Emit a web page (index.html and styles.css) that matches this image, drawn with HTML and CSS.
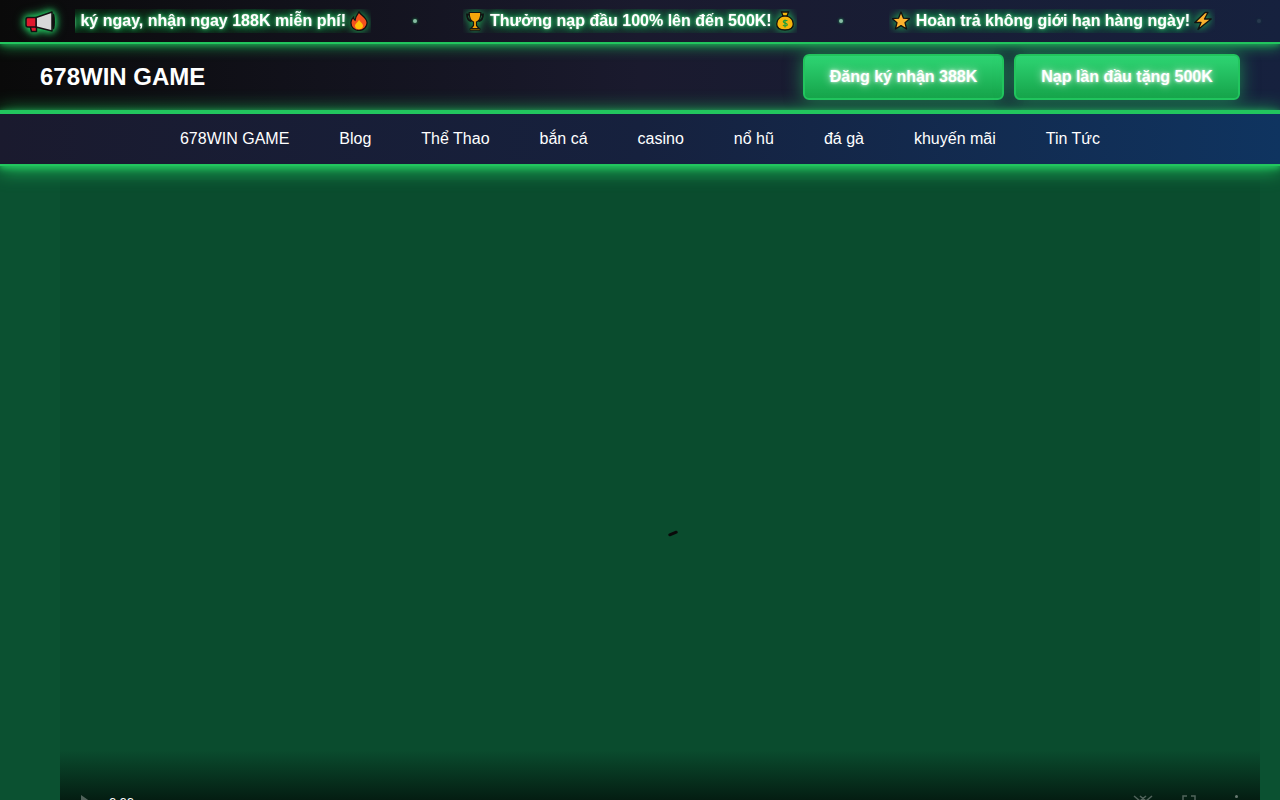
FILE: index.html
```html
<!DOCTYPE html>
<html lang="vi">
<head>
    <meta charset="UTF-8">
    <meta name="viewport" content="width=device-width, initial-scale=1.0">
    <title>678WIN GAME</title>
    <link rel="stylesheet" href="styles.css">
</head>
<body>
    <!-- Ticker -->
    <div class="ticker">
        <div class="ticker-icon">
            <svg width="32" height="26" viewBox="0 0 32 26">
                <path d="M6 18h6.500v5.500H7.500z" fill="#e0182d" stroke="#111" stroke-width="1.500" stroke-linejoin="round"/>
                <path d="M12 9.500 28 4v19l-16-4z" fill="#d8d8d8" stroke="#111" stroke-width="1.500" stroke-linejoin="round"/>
                <path d="M2 11.500Q2 9.500 4 9.500h8v9.500H4Q2 19 2 17z" fill="#e0182d" stroke="#111" stroke-width="1.500" stroke-linejoin="round"/>
                <ellipse cx="29.500" cy="13.500" rx="1.500" ry="8" fill="#111"/>
            </svg>
        </div>
        <div class="ticker-window">
            <div class="ticker-track">
                <span class="ticker-item">
                    Đăng ký ngay, nhận ngay 188K miễn phí!
                    <svg class="emoji emoji-end" width="18" height="20" viewBox="0 0 18 20">
                        <path d="M9 .8c1 3 7 5 8 10.200.6 4.500-3.500 8.500-8 8.500s-8.500-3.500-8-8.500c.2-2 1.300-3.800 2.500-4.800 0 1.500.5 2.500 1.500 3C5.500 6 7 3.500 9 .8z" fill="#f4511e" stroke="#111" stroke-width="1.300"/>
                        <path d="M9 8.500c.5 2 4 3.500 4 6.500 0 2-1.800 3.300-4 3.300S5 17 5 15c0-2.500 3.500-4 4-6.500z" fill="#ffc107"/>
                    </svg>
                </span>
                <span class="ticker-dot"></span>
                <span class="ticker-item">
                    <svg class="emoji" width="18" height="20" viewBox="0 0 18 20">
                        <path d="M4 3.500H1c0 4 1 6 4.500 7M14 3.500h3c0 4-1 6-4.500 7" fill="none" stroke="#111" stroke-width="1.800"/>
                        <path d="M3.200 1.500h11.600c0 5-1.500 8.500-4.300 9.500v3.500l2.500 3H5l2.500-3V11c-2.800-1-4.300-4.500-4.300-9.500z" fill="#f5a50b" stroke="#111" stroke-width="1.200"/>
                        <path d="M4 17.500h10v1.800H4z" fill="#8a5a00" stroke="#111" stroke-width=".8"/>
                    </svg>
                    Thưởng nạp đầu 100% lên đến 500K!
                    <svg class="emoji emoji-end" width="18" height="20" viewBox="0 0 18 20">
                        <path d="M5.500 1h7l-1.500 4c4 1.500 6.300 5 6.300 8 0 3.500-3 6-8.300 6S.7 16.500.7 13c0-3 2.300-6.500 6.300-8z" fill="#f5b50b" stroke="#111" stroke-width="1.300"/>
                        <path d="M6 5h6" stroke="#111" stroke-width="1.500"/>
                        <path d="M11.300 10c-.5-1-3.800-1.200-4 .5-.2 2 4 1.300 4 3.200 0 1.600-3.500 1.500-4.300.3M9 8.500v8" fill="none" stroke="#1f9d3a" stroke-width="1.200"/>
                    </svg>
                </span>
                <span class="ticker-dot"></span>
                <span class="ticker-item">
                    <svg class="emoji" width="18" height="20" viewBox="0 0 18 20">
                        <path d="M9 1 11.500 7.200l6.400.4-4.900 4.100 1.600 6.300L9 14.600 3.400 18 5 11.700.1 7.600l6.400-.4z" fill="#fdb42f" stroke="#111" stroke-width="1.300" stroke-linejoin="round"/>
                    </svg>
                    Hoàn trả không giới hạn hàng ngày!
                    <svg class="emoji emoji-end" width="18" height="20" viewBox="0 0 18 20">
                        <path d="M11 1.500 .8 11.500H7L4 18.500 17.200 8H10.500l3.500-6.500z" fill="#fbb02d" stroke="#111" stroke-width="1.300" stroke-linejoin="round"/>
                    </svg>
                </span>
                <span class="ticker-dot ticker-dot-dim"></span>
            </div>
        </div>
    </div>

    <!-- Header -->
    <header class="site-header">
        <a class="logo" href="#">678WIN GAME</a>
        <div class="header-actions">
            <a class="btn-cta btn-register" href="#">Đăng ký nhận 388K</a>
            <a class="btn-cta btn-deposit" href="#">Nạp lần đầu tặng 500K</a>
        </div>
    </header>

    <!-- Main nav -->
    <nav class="main-nav">
        <a href="#">678WIN GAME</a>
        <a href="#">Blog</a>
        <a href="#">Thể Thao</a>
        <a href="#">bắn cá</a>
        <a href="#">casino</a>
        <a href="#">nổ hũ</a>
        <a href="#">đá gà</a>
        <a href="#">khuyến mãi</a>
        <a href="#">Tin Tức</a>
    </nav>

    <!-- Video -->
    <main class="content">
        <div class="video-player">
            <span class="spinner-dash"></span>
            <div class="video-controls">
                <svg class="ctrl-play" width="12" height="14" viewBox="0 0 12 14"><path d="M1 0l10 7-10 7z"/></svg>
                <span class="ctrl-time">0:00</span>
                <svg class="ctrl-volume" width="20" height="16" viewBox="0 0 20 16"><path d="M1 1l6 5 6-5M7 1l6 5 6-5" fill="none" stroke="#fff" stroke-width="1.500"/></svg>
                <svg class="ctrl-full" width="14" height="14" viewBox="0 0 14 14"><path d="M1 5V1h4M9 1h4v4" fill="none" stroke="#fff" stroke-width="1.500"/></svg>
                <span class="ctrl-more"></span>
            </div>
        </div>
    </main>
</body>
</html>
```

FILE: styles.css
```css
* {
    margin: 0;
    padding: 0;
    box-sizing: border-box;
}

html, body {
    height: 800px;
    overflow: hidden;
}

body {
    font-family: "Liberation Sans", Arial, sans-serif;
    background: #0b5131;
    color: #fff;
}

a {
    color: inherit;
    text-decoration: none;
}

/* Ticker */
.ticker {
    position: relative;
    z-index: 3;
    display: flex;
    align-items: center;
    height: 44px;
    background: linear-gradient(90deg, #0a0a0a 0%, #1a1a2e 50%, #16213e 100%);
    border-bottom: 2px solid #22c55e;
    box-shadow: 0 1px 5px rgba(34, 197, 94, 0.6), 0 2px 14px rgba(34, 197, 94, 0.8);
}

.ticker-icon {
    flex: none;
    width: 75px;
    height: 26px;
    padding-left: 24px;
}

.ticker-icon svg {
    display: block;
    overflow: visible;
    filter: drop-shadow(0 0 3px #22c55e) drop-shadow(0 0 4px #22c55e);
}

.ticker-window {
    flex: 1;
    overflow: hidden;
}

.ticker-track {
    display: flex;
    align-items: center;
    margin-left: -42px;
    white-space: nowrap;
    transform: translateZ(0);
}

.ticker-item {
    flex: none;
    display: flex;
    align-items: center;
    gap: 6px;
    height: 24px;
    padding: 0 3px;
    overflow: hidden;
    font-size: 16px;
    font-weight: bold;
    line-height: 24px;
    color: #fff;
    text-shadow: 0 0 2px rgba(255, 255, 255, 0.5), 0 0 5px #22c55e, 0 0 10px #22c55e, 0 0 20px #22c55e;
}

.emoji {
    flex: none;
    filter: drop-shadow(0 0 4px #22c55e);
}

.emoji-end {
    margin-left: -2px;
}

.ticker-dot {
    flex: none;
    width: 4px;
    height: 4px;
    margin: 0 46px 0 42px;
    border-radius: 50%;
    background: #a5e6c3;
    box-shadow: 0 0 3px #22c55e;
    opacity: 0.8;
}

.ticker-dot-dim {
    opacity: 0.12;
}

/* Header */
.site-header {
    display: flex;
    align-items: center;
    justify-content: space-between;
    height: 66px;
    padding: 0 40px;
    background: linear-gradient(90deg, #0a0a0a 0%, #1a1a2e 50%, #16213e 100%);
}

.logo {
    font-size: 24px;
    font-weight: bold;
}

.header-actions {
    display: flex;
    gap: 10px;
}

.btn-cta {
    display: flex;
    align-items: center;
    justify-content: center;
    height: 46px;
    font-size: 16px;
    font-weight: bold;
    border: 2px solid #22c55e;
    border-radius: 6px;
    background: linear-gradient(180deg, #2ed573 0%, #16a34a 100%);
    box-shadow: 0 0 18px rgba(34, 197, 94, 0.6);
    text-shadow: 0 0 3px rgba(255, 255, 255, 0.8), 0 0 8px rgba(255, 255, 255, 0.8);
}

.btn-register {
    width: 201px;
}

.btn-deposit {
    width: 226px;
}

/* Nav */
.main-nav {
    position: relative;
    z-index: 2;
    display: flex;
    justify-content: center;
    gap: 50px;
    height: 56px;
    line-height: 50px;
    font-size: 16px;
    border-top: 4px solid #22c55e;
    border-bottom: 2px solid #22c55e;
    background: linear-gradient(90deg, #1a1a2e 0%, #16213e 50%, #0f3460 100%);
    box-shadow: 0 2px 6px #22c55e, 0 3px 20px #22c55e;
}

/* Video */
.content {
    height: 634px;
    padding: 14px 0 0 60px;
    overflow: hidden;
}

.video-player {
    position: relative;
    width: 1200px;
    height: 675px;
    background: linear-gradient(180deg, #0a4c2e 0%, #0a4c2e 570px, #041d12 620px);
}

.spinner-dash {
    position: absolute;
    left: 608px;
    top: 352px;
    width: 10px;
    height: 3px;
    border-radius: 2px;
    background: #0a0a0a;
    transform: rotate(-22deg);
}

.video-controls {
    position: absolute;
    left: 0;
    right: 0;
    top: 615px;
    display: flex;
    align-items: flex-start;
    padding: 0 22px 0 20px;
}

.ctrl-play {
    flex: none;
    fill: #fff;
    opacity: 0.3;
}

.ctrl-time {
    margin-left: 17px;
    font-family: Roboto, "Liberation Sans", sans-serif;
    font-size: 13px;
    line-height: 15px;
}

.ctrl-volume {
    margin-left: auto;
    opacity: 0.3;
}

.ctrl-full {
    margin-left: 29px;
    opacity: 0.3;
}

.ctrl-more {
    width: 3px;
    height: 3px;
    margin-left: 39px;
    border-radius: 50%;
    background: #fff;
    opacity: 0.4;
}
```
